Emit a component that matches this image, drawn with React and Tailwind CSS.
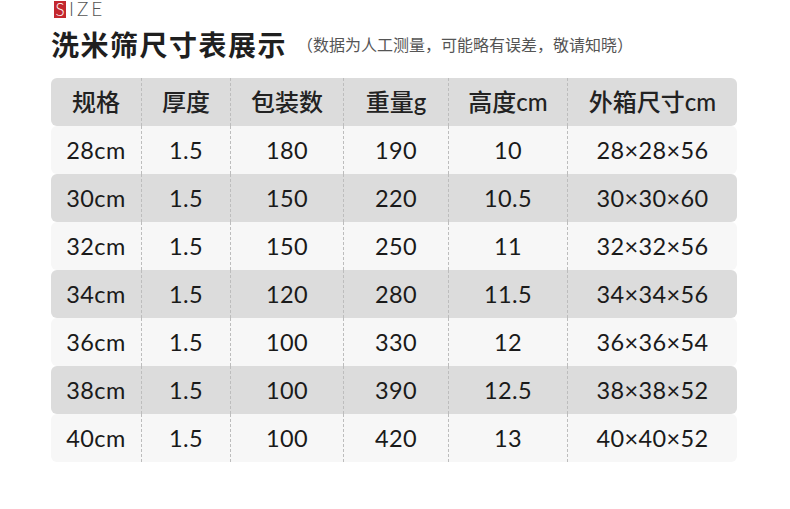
const HEAD = ['规格', '厚度', '包装数', '重量g', '高度cm', '外箱尺寸cm'];

const ROWS = [
  ['28cm', '1.5', '180', '190', '10', '28×28×56'],
  ['30cm', '1.5', '150', '220', '10.5', '30×30×60'],
  ['32cm', '1.5', '150', '250', '11', '32×32×56'],
  ['34cm', '1.5', '120', '280', '11.5', '34×34×56'],
  ['36cm', '1.5', '100', '330', '12', '36×36×54'],
  ['38cm', '1.5', '100', '390', '12.5', '38×38×52'],
  ['40cm', '1.5', '100', '420', '13', '40×40×52'],
];

function Row({ cells, dark, head }) {
  return (
    <div
      className={`grid grid-cols-[90px_89px_113px_105px_119px_170px] h-12 rounded-md ${
        dark ? 'bg-[#dcdcdc]' : 'bg-[#f7f7f7]'
      }`}
    >
      {cells.map((c, i) => (
        <div
          key={i}
          className={`flex items-center justify-center ${
            i > 0 ? 'border-l border-dashed border-[#bdbdbd]' : ''
          } ${
            head
              ? 'text-[24px] font-medium text-[#222]'
              : 'text-[23.5px] tracking-[0.4px] text-[#1a1a1a] pt-[1px]'
          }`}
        >
          {c}
        </div>
      ))}
    </div>
  );
}

export default function App() {
  return (
    <div
      className="w-[790px] h-[509px] bg-white overflow-hidden px-[51px]"
      style={{ fontFamily: "Lato, 'Noto Sans CJK SC', sans-serif" }}
    >
      {/* SIZE mark */}
      <div className="h-[18px] flex items-end">
        <div className="flex items-end leading-none">
          <span className="ml-[3px] bg-[#c3272e] text-white text-[17px] font-light leading-none h-[17px] w-[12px] flex items-end justify-center">
            S
          </span>
          <span className="ml-[3px] text-[19px] font-light text-[#555] tracking-[3px] leading-none">
            IZE
          </span>
        </div>
      </div>

      {/* title */}
      <div className="h-[60px] flex items-center pb-[6px]">
        <h1 className="text-[28px] font-bold text-[#1f1f1f] tracking-[1.5px] leading-none">
          洗米筛尺寸表展示
        </h1>
        <span className="ml-[10px] text-[16px] text-[#555] leading-none">
          （数据为人工测量，可能略有误差，敬请知晓）
        </span>
      </div>

      {/* table */}
      <div className="w-[686px]">
        <Row cells={HEAD} dark head />
        {ROWS.map((r, i) => (
          <Row key={r[0]} cells={r} dark={i % 2 === 1} />
        ))}
      </div>
    </div>
  );
}
